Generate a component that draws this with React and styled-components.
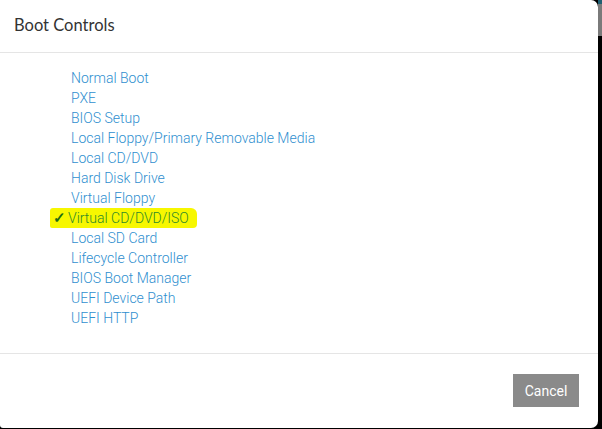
import React from "react";
import styled, { createGlobalStyle } from "styled-components";

const GlobalStyle = createGlobalStyle`
  html, body {
    margin: 0;
    padding: 0;
    background: #000;
    width: 602px;
    height: 429px;
    overflow: hidden;
  }
  * {
    box-sizing: border-box;
  }
`;

const Screen = styled.div`
  display: flex;
  width: 602px;
  height: 429px;
  background: #000;
`;

const Modal = styled.div`
  width: 598px;
  height: 428px;
  background: #fff;
  border-radius: 0 7px 7px 3px;
  display: flex;
  flex-direction: column;
`;

const Rail = styled.div`
  flex: 1;
  display: flex;
  flex-direction: column;
`;

const RailThumb = styled.div`
  height: 36px;
  background: linear-gradient(#1f5f73 0, #1f5f73 4px, #7a7a7a 4px);
`;

const Header = styled.div`
  height: 53px;
  padding: 0 14px 3px;
  display: flex;
  align-items: center;
  border-bottom: 1px solid #e5e5e5;
`;

const Title = styled.h4`
  margin: 0;
  font-family: Lato, "Open Sans", sans-serif;
  font-size: 16.5px;
  font-weight: 400;
  color: #333;
`;

const Body = styled.ul`
  list-style: none;
  margin: 0;
  padding: 15px 0 25px 71px;
  border-bottom: 1px solid #e5e5e5;
`;

const Item = styled.li`
  height: 20px;
  line-height: 20px;
  font-family: Roboto, "Liberation Sans", sans-serif;
  font-size: 14px;
  font-weight: 300;
  color: #2f8fcf;
`;

const Marked = styled.span`
  display: inline-flex;
  align-items: center;
  margin-left: -21px;
  padding: 0 8px 0 3px;
  height: 20px;
  background: #f7f700;
  border-radius: 3px 6px 4px 2px;
  color: #2f8a2a;
`;

const Check = styled.span`
  width: 15px;
  font-size: 15px;
  font-weight: 700;
  color: #1d6b14;
`;

const Footer = styled.div`
  flex: 1;
  display: flex;
  justify-content: flex-end;
  align-items: flex-start;
  padding: 20px 19px 0 0;
`;

const Button = styled.button`
  width: 66px;
  height: 33px;
  border: none;
  border-radius: 0;
  background: #8a8a8a;
  color: #fff;
  font-family: Roboto, "Liberation Sans", sans-serif;
  font-size: 14px;
  padding: 0;
  cursor: pointer;
`;

const items = [
  "Normal Boot",
  "PXE",
  "BIOS Setup",
  "Local Floppy/Primary Removable Media",
  "Local CD/DVD",
  "Hard Disk Drive",
  "Virtual Floppy",
  "Virtual CD/DVD/ISO",
  "Local SD Card",
  "Lifecycle Controller",
  "BIOS Boot Manager",
  "UEFI Device Path",
  "UEFI HTTP",
];

const selected = "Virtual CD/DVD/ISO";

const App = () => (
  <>
    <GlobalStyle />
    <Screen>
      <Modal>
        <Header>
          <Title>Boot Controls</Title>
        </Header>
        <Body>
          {items.map((name) => (
            <Item key={name}>
              {name === selected ? (
                <Marked>
                  <Check>✓</Check>
                  {name}
                </Marked>
              ) : (
                name
              )}
            </Item>
          ))}
        </Body>
        <Footer>
          <Button>Cancel</Button>
        </Footer>
      </Modal>
      <Rail>
        <RailThumb />
      </Rail>
    </Screen>
  </>
);

export default App;
